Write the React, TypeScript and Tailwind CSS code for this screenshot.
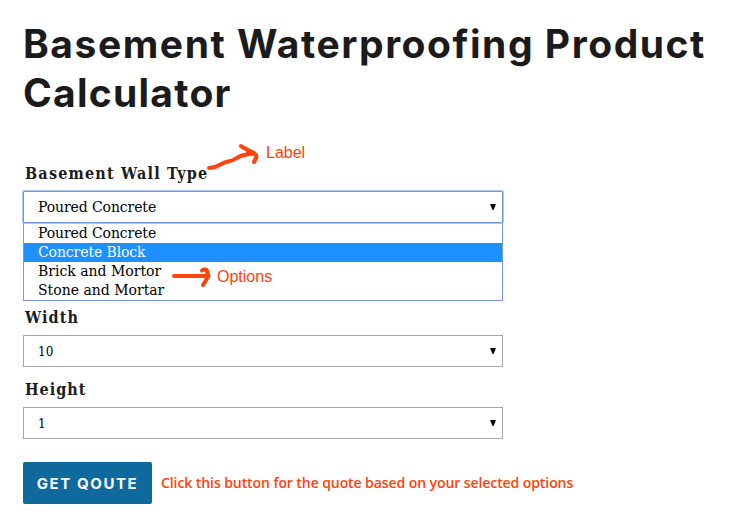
import type { ReactNode } from "react";

const serif = "font-['DejaVu_Serif',serif]";

function Caret() {
  return (
    <svg className="mr-[6px] h-[7px] w-[6px]" viewBox="0 0 6 7" fill="#000">
      <path d="M0 0H6L3.5 6H2.5Z" />
    </svg>
  );
}

function Label({ children, tracking }: { children: ReactNode; tracking: string }) {
  return (
    <label className={`block h-6 whitespace-nowrap pt-px pl-[2px] font-['DejaVu_Serif_Condensed','DejaVu_Serif',serif] text-[16px] leading-6 font-bold text-[#1b1b1b] ${tracking}`}>
      {children}
    </label>
  );
}

function Select({ children, className, textClass }: { children: ReactNode; className: string; textClass: string }) {
  return (
    <div className={`flex h-8 w-[480px] items-center justify-between border pl-[14px] text-black ${serif} ${className}`}>
      <span className={textClass}>{children}</span>
      <Caret />
    </div>
  );
}

const options = [
  { text: "Poured Concrete", style: "tracking-[-0.1px] text-black" },
  { text: "Concrete Block", style: "tracking-[-0.1px] bg-[#1e90ff] text-white" },
  { text: "Brick and Mortor", style: "text-black" },
  { text: "Stone and Mortar", style: "text-black" },
];

export default function App() {
  return (
    <main className="relative h-[525px] w-[742px] overflow-hidden bg-white pl-[23px] pt-[19px]">
      <h1 className="h-[98px] whitespace-nowrap font-['Inter',sans-serif] text-[39px] leading-[49px] font-bold text-[#1b1b1b]">
        <span className="block tracking-[1.55px]">Basement Waterproofing Product</span>
        <span className="block tracking-[1.25px]">Calculator</span>
      </h1>

      <section className="pt-[44px]">
        <Label tracking="tracking-[1.2px]">Basement Wall Type</Label>
        <Select className="mt-[6px] rounded-[1px] border-[#6f9ae0] shadow-[0_0_0_1px_#a9c8f5]" textClass="text-[14px] tracking-[-0.1px]">
          Poured Concrete
        </Select>
        <ul className={`h-[78px] w-[480px] border border-t-0 border-[#7399d6] pt-px text-[14px] leading-[19px] ${serif}`}>
          {options.map((option) => (
            <li key={option.text} className={`h-[19px] pl-[14px] whitespace-nowrap ${option.style}`}>
              {option.text}
            </li>
          ))}
        </ul>
      </section>

      <section className="pt-1">
        <Label tracking="tracking-[1.1px]">Width</Label>
        <Select className="mt-[6px] border-[#a6a6a6]" textClass="pt-[2px] text-[12px]">10</Select>
      </section>

      <section className="pt-[10px]">
        <Label tracking="tracking-[1px]">Height</Label>
        <Select className="mt-[6px] border-[#a6a6a6]" textClass="pt-[2px] text-[12px]">1</Select>
      </section>

      <div className="mt-[23px] flex items-center">
        <button className="h-[42px] w-[129px] rounded-[2px] bg-[#10699c] pt-[2px] font-['Inter',sans-serif] text-[15px] font-bold whitespace-nowrap tracking-[1.6px] text-white">
          GET QOUTE
        </button>
        <p className="mb-[2px] ml-[9px] font-['Open_Sans',sans-serif] text-[14px] font-semibold whitespace-nowrap tracking-[-0.08px] text-[#ff430b]">
          Click this button for the quote based on your selected options
        </p>
      </div>

      <svg className="absolute top-[140px] left-[200px] h-10 w-[64px]" viewBox="0 0 64 40" fill="none" stroke="#ff430b" strokeWidth="4" strokeLinecap="round" strokeLinejoin="round">
        <path d="M9 28C18 28 20 23 28 21.5C35 21 36 17 42 15.5L54 13" />
        <path d="M41 6C43 8 46 9 49 10.5C53 12 56 14 56.5 17L54 22M48 12L56 15" />
      </svg>
      <span className="absolute top-[143px] left-[266px] font-['Liberation_Sans',sans-serif] text-[16px] leading-5 text-[#ff430b]">Label</span>

      <svg className="absolute top-[260px] left-[166px] h-[32px] w-[50px]" viewBox="0 0 50 32" fill="none" stroke="#ff430b" strokeWidth="4" strokeLinecap="round" strokeLinejoin="round">
        <path d="M8 16H42" />
        <path d="M36 10.5C38 9 41 9 41 11.5L42.5 16L37 25" />
      </svg>
      <span className="absolute top-[267px] left-[217px] font-['Liberation_Sans',sans-serif] text-[16px] leading-5 text-[#ff430b]">Options</span>
    </main>
  );
}
